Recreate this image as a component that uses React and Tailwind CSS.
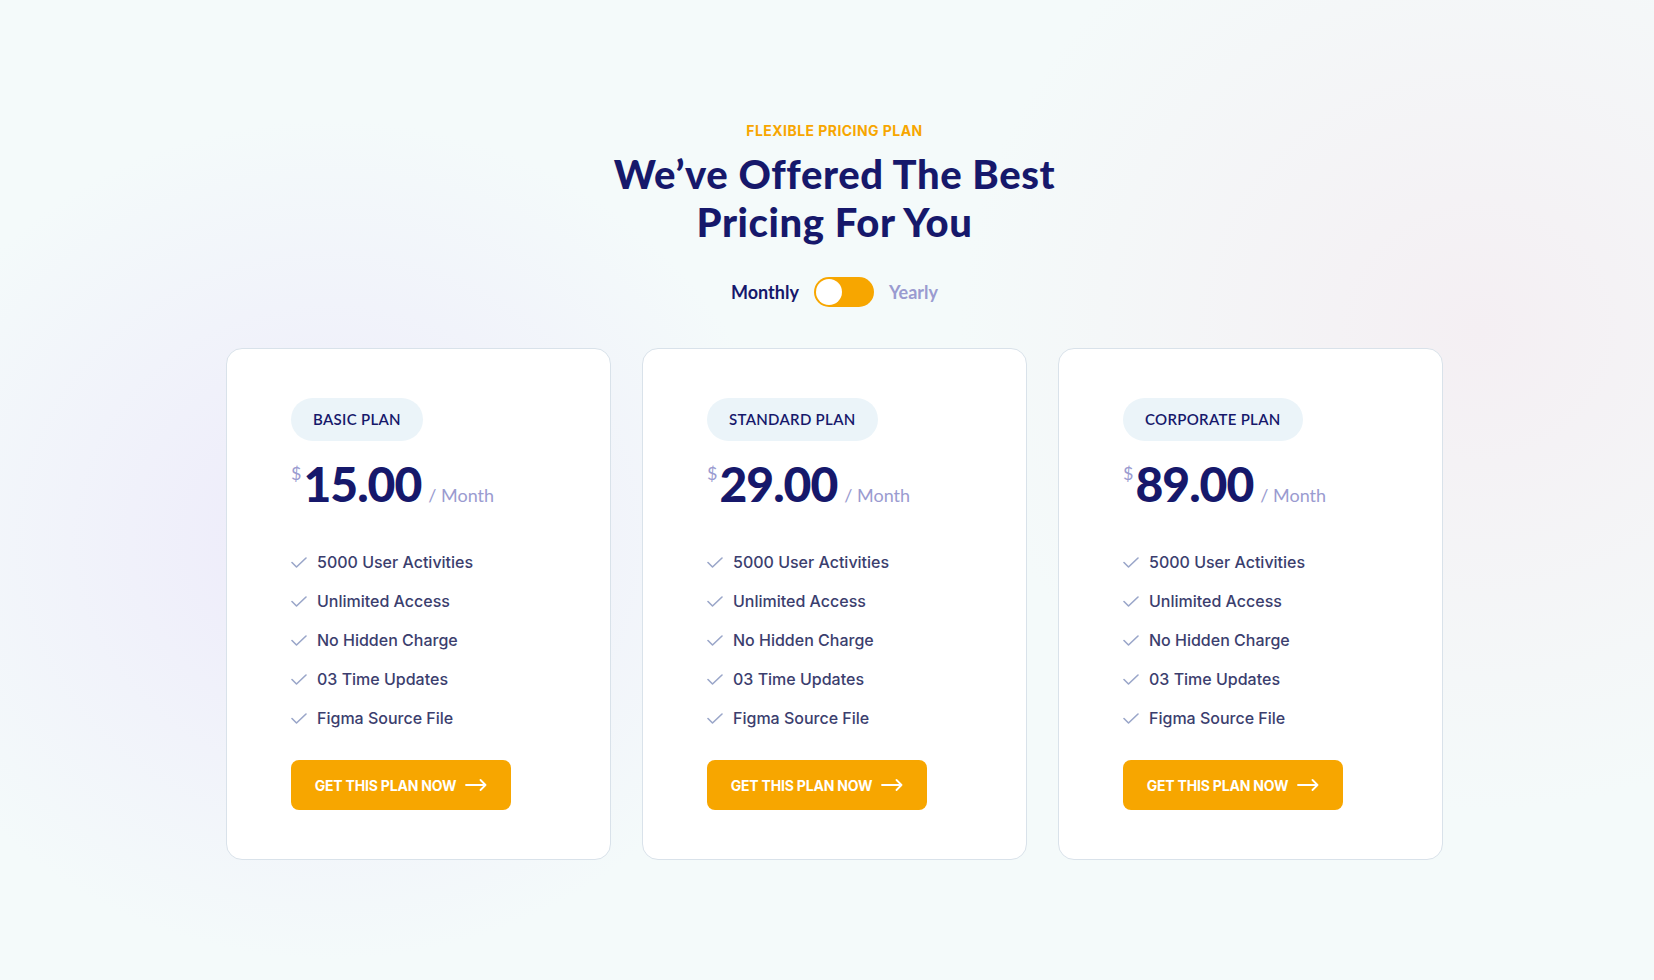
import React, { useState } from "react";

const plans = [
	{ id: 1, name: "BASIC PLAN", price: "15.00" },
	{ id: 2, name: "STANDARD PLAN", price: "29.00" },
	{ id: 3, name: "CORPORATE PLAN", price: "89.00" },
];

const features = [
	"5000 User Activities",
	"Unlimited Access",
	"No Hidden Charge",
	"03 Time Updates",
	"Figma Source File",
];

const CheckIcon = () => (
	<svg width="16" height="11" viewBox="0 0 16 11" fill="none" className="shrink-0">
		<path d="M1 5.5L5.5 10L15 1" stroke="#9aa6c9" strokeWidth="1.6" strokeLinecap="round" strokeLinejoin="round" />
	</svg>
);

const ArrowIcon = () => (
	<svg width="22" height="12" viewBox="0 0 22 12" fill="none">
		<path d="M1 6H20.5M15.5 1L20.5 6L15.5 11" stroke="white" strokeWidth="1.8" strokeLinecap="round" strokeLinejoin="round" />
	</svg>
);

const PlanCard = ({ plan }) => {
	return (
		<div className="w-[385px] bg-white border border-[#d9e2ea] rounded-2xl pl-[64px] pt-[49px] pb-[49px]">
			{/* badge */}
			<div className="inline-flex items-center h-[43px] px-[22px] rounded-full bg-[#ebf4f9] text-[15px] font-semibold tracking-[0.3px] text-[#16186b] font-['Lato',sans-serif]">
				{plan.name}
			</div>

			{/* price */}
			<div className="flex items-baseline mt-[19px] font-['Lato',sans-serif]">
				<span className="self-start text-[18px] leading-none text-[#9a9bd0] mt-[4px] mr-[2px]">$</span>
				<span className="text-[48px] leading-[48px] font-black text-[#16186b] tracking-[-1px]">{plan.price}</span>
				<span className="ml-[7px] text-[18px] text-[#9a9bd0]">/ Month</span>
			</div>

			{/* features */}
			<ul className="mt-[41px] flex flex-col gap-[15px] font-['Inter',sans-serif]">
				{features.map((f) => (
					<li key={f} className="flex items-center gap-[10px] text-[16px] leading-[24px] font-medium text-[#3b3e6e]">
						<CheckIcon />
						{f}
					</li>
				))}
			</ul>

			<button className="mt-[30px] w-[220px] h-[50px] rounded-lg bg-[#f7a600] flex items-center justify-center gap-[9px] text-white text-[14px] font-bold font-['Inter',sans-serif] tracking-[-0.2px]">
				GET THIS PLAN NOW
				<ArrowIcon />
			</button>
		</div>
	);
};

const App = () => {
	const [yearly, setYearly] = useState(false);

	return (
		<div className="min-h-[980px] w-full bg-[#f4fafa] bg-[radial-gradient(ellipse_460px_420px_at_330px_540px,#edeafa_0%,rgba(244,250,250,0)_100%),radial-gradient(ellipse_520px_480px_at_1480px_330px,#f4eff3_0%,rgba(244,250,250,0)_100%)] pl-[15px] pt-[121px]">
			<div className="flex flex-col items-center">
				<p className="text-[14px] leading-[20px] font-bold text-[#f7a600] font-['Inter',sans-serif] tracking-[0.45px]">
					FLEXIBLE PRICING PLAN
				</p>
				<h1 className="mt-[9px] text-[40px] leading-[48px] font-black text-[#16186b] text-center font-['Lato',sans-serif] tracking-[0.6px]">
					We’ve Offered The Best
					<br />
					Pricing For You
				</h1>

				{/* toggle */}
				<div className="mt-[31px] flex items-center font-['Lato',sans-serif] text-[18px] font-bold">
					<span className={yearly ? "text-[#9a9bd0]" : "text-[#16186b]"}>Monthly</span>
					<button
						onClick={() => setYearly((v) => !v)}
						className={`mx-[15px] w-[60px] h-[30px] rounded-full bg-[#f7a600] p-[2px] flex ${yearly ? "justify-end" : "justify-start"}`}
					>
						<span className="block w-[26px] h-[26px] rounded-full bg-white" />
					</button>
					<span className={yearly ? "text-[#16186b]" : "text-[#9a9bd0]"}>Yearly</span>
				</div>

				{/* cards */}
				<div className="mt-[41px] flex gap-[31px]">
					{plans.map((plan) => (
						<PlanCard key={plan.id} plan={plan} />
					))}
				</div>
			</div>
		</div>
	);
};

export default App;
